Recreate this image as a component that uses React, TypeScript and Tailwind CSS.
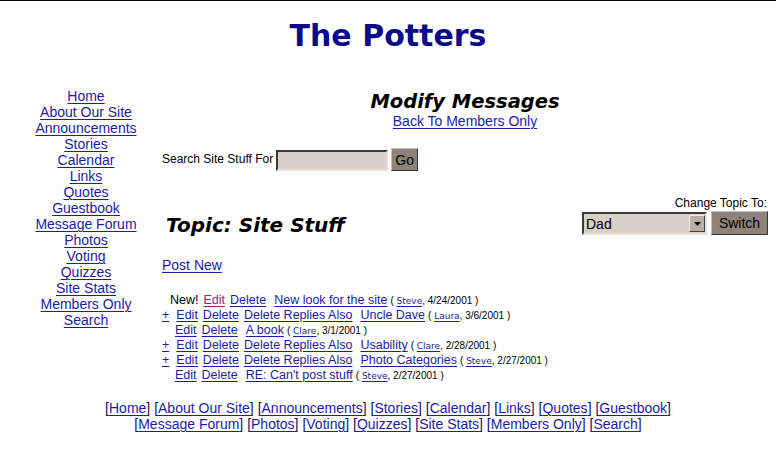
const navItems = [
  'Home',
  'About Our Site',
  'Announcements',
  'Stories',
  'Calendar',
  'Links',
  'Quotes',
  'Guestbook',
  'Message Forum',
  'Photos',
  'Voting',
  'Quizzes',
  'Site Stats',
  'Members Only',
  'Search',
]

const footerRows = [
  ['Home', 'About Our Site', 'Announcements', 'Stories', 'Calendar', 'Links', 'Quotes', 'Guestbook'],
  ['Message Forum', 'Photos', 'Voting', 'Quizzes', 'Site Stats', 'Members Only', 'Search'],
]

type Message = {
  isNew?: boolean
  hasReplies?: boolean
  title: string
  author: string
  date: string
}

const messages: Message[] = [
  { isNew: true, title: 'New look for the site', author: 'Steve', date: '4/24/2001' },
  { hasReplies: true, title: 'Uncle Dave', author: 'Laura', date: '3/6/2001' },
  { title: 'A book', author: 'Clare', date: '3/1/2001' },
  { hasReplies: true, title: 'Usability', author: 'Clare', date: '2/28/2001' },
  { hasReplies: true, title: 'Photo Categories', author: 'Steve', date: '2/27/2001' },
  { title: "RE: Can't post stuff", author: 'Steve', date: '2/27/2001' },
]

const link = 'text-[#1c1ca4] underline decoration-1 underline-offset-[2px]'
const verdana = "font-['DejaVu_Sans',Verdana,sans-serif]"

function MessageRow({ message }: { message: Message }) {
  let lead = 'ml-[13px]'
  if (message.isNew) lead = 'ml-[5px]'
  return (
    <div className="flex h-[15px] items-baseline whitespace-nowrap">
      {message.isNew && <span className="ml-[8px] text-black">New!</span>}
      {message.hasReplies && <a className={link}>+</a>}
      <a
        className={`${message.hasReplies ? 'ml-[7px]' : lead} ${
          message.isNew ? 'text-[#7d2a7d] underline decoration-1 underline-offset-[2px]' : link
        }`}
      >
        Edit
      </a>
      <a className={`ml-[5px] ${link}`}>Delete</a>
      {message.hasReplies && <a className={`ml-[5px] ${link}`}>Delete Replies Also</a>}
      <a className={`${message.hasReplies || message.isNew ? 'ml-[8px]' : 'ml-[8px]'} ${link}`}>
        {message.title}
      </a>
      <span className="ml-[3px] text-[10px] text-black">
        ({' '}
        <a className={`${verdana} text-[9px] ${link}`}>{message.author}</a>, {message.date} )
      </span>
    </div>
  )
}

function GrayButton({ label, className }: { label: string; className: string }) {
  return (
    <button
      className={`border border-t-[#c8c0b8] border-l-[#c8c0b8] border-r-[#3a3430] border-b-[#3a3430] bg-[#8e837a] text-[14px] leading-none text-black ${className}`}
    >
      {label}
    </button>
  )
}

export default function App() {
  return (
    <div className="min-h-[457px] border-t border-black bg-white font-['Liberation_Sans',Arial,sans-serif] text-black">
      <h1 className={`pt-[17px] text-center text-[30px] font-bold leading-[36px] text-[#0a0a8a] ${verdana}`}>
        The Potters
      </h1>

      <div className="mt-[34px] flex">
        <nav className="flex w-[162px] shrink-0 flex-col items-center pl-[10px] text-[14px] leading-[16px]">
          {navItems.map((item) => (
            <a key={item} className={link}>
              {item}
            </a>
          ))}
        </nav>

        <main className="flex flex-1 flex-col pr-[8px]">
          <div className="flex flex-col items-center">
            <h2 className={`pt-[3px] text-[19.5px] font-bold italic leading-[22px] ${verdana}`}>Modify Messages</h2>
            <a className={`block text-[14px] leading-[16px] ${link}`}>Back To Members Only</a>
          </div>

          <div className="mt-[19px] flex items-end text-[12px]">
            <span className="mb-[3px]">Search Site Stuff For</span>
            <input
              className="ml-[3px] h-[21px] w-[112px] border-2 border-t-[#3c3834] border-l-[#3c3834] border-r-[#e8e2de] border-b-[#e8e2de] bg-[#d8cfcb] outline-none"
              readOnly
            />
            <GrayButton label="Go" className="ml-[3px] h-[23px] w-[27px]" />
          </div>

          <div className="mt-[25px] flex items-end justify-between">
            <h3 className={`mb-[-2px] ml-[4px] text-[20px] font-bold italic leading-[24px] ${verdana}`}>
              Topic: Site Stuff
            </h3>
            <div className="flex flex-col items-end">
              <span className="mr-[1px] text-[12px] leading-[14px]">Change Topic To:</span>
              <div className="mt-[1px] flex items-start">
                <div className="mt-[1px] flex h-[23px] w-[125px] items-center border-2 border-t-[#3c3834] border-l-[#3c3834] border-r-[#e8e2de] border-b-[#e8e2de] bg-[#d8cfcb]">
                  <span className="flex-1 pl-[2px] text-[14px] leading-none">Dad</span>
                  <span className="flex h-[17px] w-[16px] items-center justify-center border border-t-[#f0ece8] border-l-[#f0ece8] border-r-[#404040] border-b-[#404040] bg-[#b8b0a8]">
                    <svg width="7" height="4" viewBox="0 0 7 4">
                      <path d="M0 0h7L3.5 4z" fill="#000" />
                    </svg>
                  </span>
                </div>
                <GrayButton label="Switch" className="ml-[4px] h-[24px] w-[57px]" />
              </div>
            </div>
          </div>

          <a className={`mt-[22px] block w-fit text-[14px] leading-[16px] ${link}`}>Post New</a>

          <div className="mt-[20px] text-[12.5px] leading-[15px]">
            {messages.map((m) => (
              <MessageRow key={m.title} message={m} />
            ))}
          </div>
        </main>
      </div>

      <footer className="mt-[17px] text-center text-[14px] leading-[16px]">
        {footerRows.map((row, i) => (
          <div key={i}>
            {row.map((item, j) => (
              <span key={item}>
                {j > 0 && ' '}
                <span className="text-[#10106a]">[</span>
                <a className={link}>{item}</a>
                <span className="text-[#10106a]">]</span>
              </span>
            ))}
          </div>
        ))}
      </footer>
    </div>
  )
}
